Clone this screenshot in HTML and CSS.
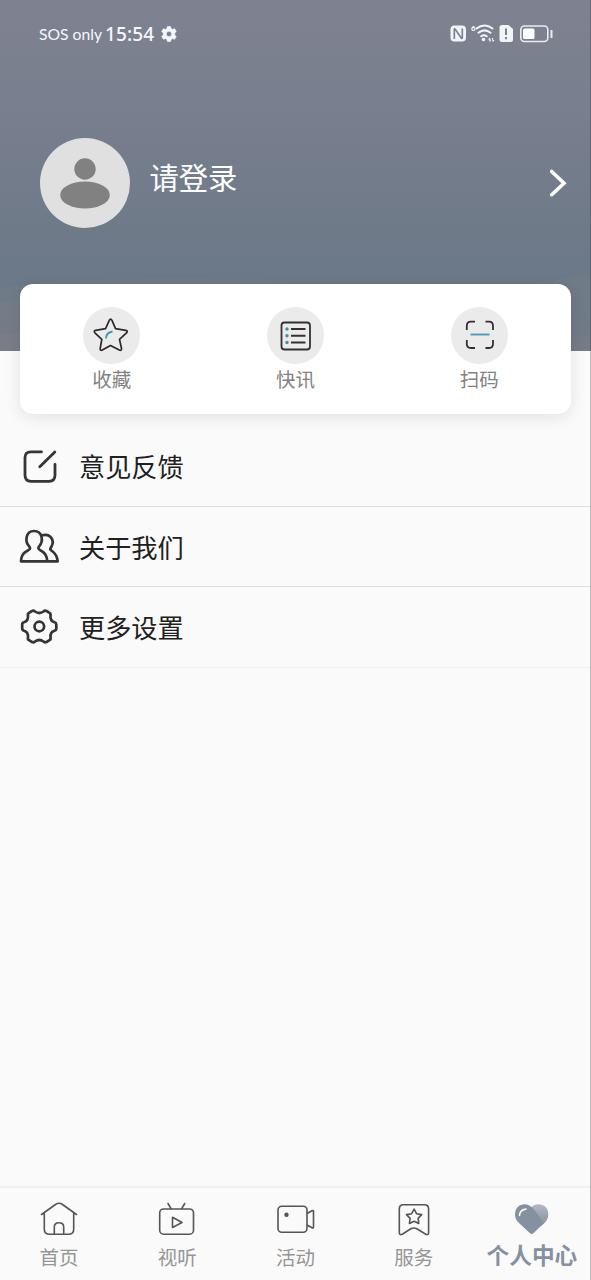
FILE: index.html
```html
<!DOCTYPE html>
<html lang="zh-CN">
<head>
<meta charset="utf-8">
<title>个人中心</title>
<link rel="stylesheet" href="styles.css">
</head>
<body>
<div class="screen">
  <header class="hero">
    <svg class="waves" viewBox="0 0 591 86" preserveAspectRatio="none">
      <path d="M0 23C80 12 170 12 260 14C390 34 480 30 591 9V86H0Z" fill="#83868b" fill-opacity=".2"/>
      <path d="M0 38C60 26 120 23 180 23V86H0Z" fill="#8a828b" fill-opacity=".2"/>
      <path d="M0 70C250 58 400 80 591 71V86H0Z" fill="#8d858b" fill-opacity=".24"/>
    </svg>
    <div class="status">
      <span class="carrier">SOS only</span>
      <span class="time">15:54</span>
      <svg class="cog" viewBox="0 0 16 16" width="16" height="16"><path fill="#f5f8fb" stroke="#f5f8fb" stroke-width=".6" stroke-linejoin="round" fill-rule="evenodd" d="M6.400.5h3.200l.5 2.100 1.300.8 2.200-.7 1.700 2.800L13.700 7v2l1.600 1.500-1.700 2.800-2.200-.7-1.300.8-.5 2.100H6.400l-.5-2.100-1.300-.8-2.200.7L.7 10.500 2.300 9V7L.7 5.500 2.400 2.700l2.200.7 1.300-.8ZM8 5.300a2.700 2.700 0 1 0 0 5.400 2.700 2.700 0 0 0 0-5.400Z"/></svg>
      <svg class="indicators" viewBox="450 22 104 24" width="104" height="24">
        <rect x="450.500" y="25.500" width="15.500" height="16" rx="4" fill="#f2f5f8"/>
        <path d="M454.300 39V29.500Q454.300 28.500 455.300 29.300L461.200 38Q462.300 39 462.300 37.500V28.500" fill="none" stroke="#7c8290" stroke-width="1.700"/>
        <text x="471" y="31" class="wifi-gen">6</text>
        <g fill="none" stroke="#f2f5f8" stroke-width="2" stroke-linecap="round"><path d="M476.500 28.500Q484.500 22.500 492.500 28.500M478.500 32.700Q484.500 28 490.500 32.700M481.300 36.300Q484 34.300 486.700 36.300"/></g>
        <circle cx="483.500" cy="39.500" r="1.800" fill="#f2f5f8"/>
        <path d="M488 39.500l1.500-2 1.300 2v2h-1.500v-2ZM491.800 38h1.300v2h1.500l-1.800 2.200Z" fill="#f2f5f8"/>
        <path d="M502 25h6.500l4.500 4v10.500a2.500 2.500 0 0 1-2.500 2.500h-8.500a2.500 2.500 0 0 1-2.500-2.500v-12a2.500 2.500 0 0 1 2.500-2.500Z" fill="#f2f5f8"/>
        <path d="M506 28.500v6.500M506 37v2.200" stroke="#7c8290" stroke-width="2"/>
        <rect x="520.800" y="26" width="27" height="15.500" rx="3.500" fill="none" stroke="#e9ecf0" stroke-width="1.600"/>
        <rect x="523" y="28.500" width="11.500" height="10.500" rx="1.500" fill="#fff"/>
        <path d="M551.500 30v8" stroke="#e9ecf0" stroke-width="2"/>
      </svg>
    </div>
    <div class="profile">
      <svg class="avatar" viewBox="0 0 90 90" width="90" height="90"><circle cx="45" cy="45" r="45" fill="#e0e0e0"/><circle cx="45" cy="31" r="10.700" fill="#818181"/><ellipse cx="45" cy="57" rx="24.800" ry="13.500" fill="#818181"/></svg>
      <span class="login">请登录</span>
      <svg class="arrow" viewBox="548 168 20 30" width="20" height="30"><path d="M551.700 171.500L564 183.300L551.700 194.700" fill="none" stroke="#fff" stroke-width="3.600" stroke-linecap="round"/></svg>
    </div>
  </header>

  <section class="card">
    <div class="shortcut">
      <div class="disc"><svg viewBox="83 307 57 57" width="57" height="57">
        <path d="M109.300 320.300Q110.700 318 112 320.300L115.500 328.700L125.800 330.300Q128.300 330.900 126.500 332.800L119.500 339.300L121.500 348.500Q121.700 351 119.300 350L110.500 345.500L102.300 350Q100 351 100.200 348.500L101.800 339.300L94.900 332.800Q93.300 330.900 95.600 330.300L105.600 328.700Z" fill="none" stroke="#2e292b" stroke-width="1.700" stroke-linejoin="round"/>
        <path d="M106 338.500Q106 332.500 112.500 331.500" fill="none" stroke="#359bb8" stroke-width="1.900"/>
      </svg></div>
      <span>收藏</span>
    </div>
    <div class="shortcut">
      <div class="disc"><svg viewBox="267 307 57 57" width="57" height="57">
        <rect x="281.500" y="322.500" width="28.500" height="27" rx="3" fill="none" stroke="#343032" stroke-width="1.800"/>
        <path d="M291 329h14.500M291 335.700h14.500M291 342.500h14.500" stroke="#343032" stroke-width="1.900"/>
        <g fill="#3f8fb0"><circle cx="287" cy="329" r="1.700"/><circle cx="287" cy="335.700" r="1.700"/><circle cx="287" cy="342.500" r="1.700"/></g>
      </svg></div>
      <span>快讯</span>
    </div>
    <div class="shortcut">
      <div class="disc"><svg viewBox="451 307 57 57" width="57" height="57">
        <path d="M466.800 330V326Q466.800 321.700 471 321.700H475M485.500 321.700H489Q493 321.700 493 326V330M493 340V344Q493 348 489 348H485.500M475 348H471Q466.800 348 466.800 344V340" fill="none" stroke="#343032" stroke-width="1.800"/>
        <path d="M470.500 334.500H489.500" stroke="#459dbd" stroke-width="1.900"/>
      </svg></div>
      <span>扫码</span>
    </div>
  </section>

  <nav class="menu">
    <div class="row">
      <svg viewBox="19 445 41 41" width="41" height="41"><path d="M41.500 451.800H31Q25 451.800 25 457.500V475Q25 481.300 31 481.300H49Q55 481.300 55 475V464.500M39.800 466.700L54.800 452" fill="none" stroke="#353537" stroke-width="2.800" stroke-linecap="round"/></svg>
      <span>意见反馈</span>
    </div>
    <div class="row">
      <svg viewBox="19 526 41 41" width="41" height="41"><g fill="none" stroke="#353537" stroke-width="2.700" stroke-linecap="round" stroke-linejoin="round"><path d="M29.500 546.800C24.500 542 25.500 531 34 531C42.500 531 44 541 38.800 546.800C37.500 548.500 39 549.500 41.500 551Q47 554 47.300 561.300H21Q21 554 27 551C29.500 549.500 31 548.500 29.500 546.800ZM42.500 535.300C50 533 55 540 51.500 546.500C50 549 49.500 549.300 52 551Q57 554.500 57.700 561.300H47.300"/></g></svg>
      <span>关于我们</span>
    </div>
    <div class="row">
      <svg viewBox="19 606 41 41" width="41" height="41"><g fill="none" stroke="#353537" stroke-width="2.700" stroke-linejoin="round"><path d="M32 611Q33.500 610 35 611.500Q39.200 614.500 43.500 611.500Q45 610 46.500 611L49.500 612.800Q51 613.700 50.500 615.500Q50 621 54.500 622.300Q56.300 622.800 56.300 624.500V628.500Q56.300 630.200 54.500 630.700Q50 632 50.500 637.500Q51 639.300 49.500 640.200L46.500 642Q45 643 43.500 641.500Q39.200 638.500 35 641.500Q33.500 643 32 642L29 640.200Q27.500 639.300 28 637.500Q28.500 632 24 630.700Q22.200 630.200 22.200 628.500V624.500Q22.200 622.800 24 622.300Q28.500 621 28 615.500Q27.500 613.700 29 612.800Z"/><circle cx="39.300" cy="626.500" r="4.800"/></g></svg>
      <span>更多设置</span>
    </div>
  </nav>

  <footer class="tabs">
    <div class="tab">
      <svg viewBox="39 1198 40 40" width="40" height="40"><path d="M41.500 1214.500L55.500 1204.500Q59 1202 62.500 1204.500L76.500 1214.500M44.300 1213V1229Q44.300 1234.300 49.500 1234.300H68.500Q73.700 1234.300 73.700 1229V1213M54.300 1234V1227Q54.300 1222.700 59 1222.700Q63.700 1222.700 63.700 1227V1234" fill="none" stroke="#555" stroke-width="1.600" stroke-linecap="round"/></svg>
      <span>首页</span>
    </div>
    <div class="tab">
      <svg viewBox="157 1198 40 40" width="40" height="40"><g fill="none" stroke="#555" stroke-width="1.600" stroke-linejoin="round" stroke-linecap="round"><rect x="159.700" y="1209" width="33.800" height="25.200" rx="4"/><path d="M168 1203.500L171 1208.700M184.700 1203.500L181.700 1208.700M172.500 1217.300V1227.500L182 1222.500Z"/></g></svg>
      <span>视听</span>
    </div>
    <div class="tab">
      <svg viewBox="275.500 1198 40 40" width="40" height="40"><g fill="none" stroke="#555" stroke-width="1.600" stroke-linejoin="round"><rect x="277.500" y="1206.300" width="29" height="25.900" rx="3.800"/><path d="M306.500 1213.500L312 1210.500Q313 1210.300 313 1211.500V1227Q313 1228.300 312 1228L306.500 1225"/></g><circle cx="286" cy="1214.800" r="2.200" fill="#555"/></svg>
      <span>活动</span>
    </div>
    <div class="tab">
      <svg viewBox="393.700 1198 40 40" width="40" height="40"><g fill="none" stroke="#555" stroke-width="1.600" stroke-linejoin="round"><path d="M403 1204.700H424Q428.300 1204.700 428.300 1209V1232.500Q428.300 1235.500 425.500 1234.200L416.500 1228.800Q413.500 1227.200 410.500 1228.800L402 1234.200Q399 1235.500 399 1232.500V1209Q399 1204.700 403 1204.700Z"/><path d="M413.800 1209L416.200 1213.700L421.400 1214.600L417.800 1218.400L418.500 1223.500L413.800 1221.300L409.100 1223.500L409.800 1218.400L406.200 1214.600L411.400 1213.700Z"/></g></svg>
      <span>服务</span>
    </div>
    <div class="tab active">
      <svg viewBox="512 1198 40 40" width="40" height="40">
        <defs><linearGradient id="lobe" x1="0" y1="0" x2="0" y2="1"><stop offset="0" stop-color="#b3b7c2"/><stop offset="1" stop-color="#8791a0"/></linearGradient></defs>
        <path d="M531 1207.500C537 1201.500 548.300 1204 548.300 1214.500C548.300 1218.500 546.500 1221 544 1223.500L541 1226Z" fill="url(#lobe)"/>
        <path d="M533 1208.500C526 1200.500 515 1204.500 515 1214.500Q515 1219.300 519 1223L530 1233.200Q531.700 1234.800 533.400 1233.200L543.500 1223.500Q542.500 1220 533 1208.500Z" fill="#8590a0"/>
        <path d="M519.500 1215.500Q519.800 1210 526 1209" fill="none" stroke="#fff" stroke-width="1.500" stroke-linecap="round"/>
      </svg>
      <span>个人中心</span>
    </div>
  </footer>
  <div class="edge"></div>
</div>
</body>
</html>
```
FILE: styles.css
```css
* { box-sizing: border-box; }
body {
  margin: 0;
  font-family: "Noto Sans CJK SC", sans-serif;
  background: #fafafa;
}
svg { display: block; flex: none; }
.screen {
  position: relative;
  width: 591px;
  height: 1280px;
  display: flex;
  flex-direction: column;
  overflow: hidden;
}
.hero {
  position: relative;
  height: 351px;
  flex: none;
  background: linear-gradient(#7e8190 0, #7b808f 70px, #6c7988 270px, #6b7785 351px);
}
.waves {
  position: absolute;
  left: 0;
  bottom: 0;
  width: 100%;
  height: 86px;
}
.status {
  display: flex;
  align-items: center;
  height: 46px;
  padding: 22px 37px 0 39px;
  color: #f5f8fb;
  line-height: 24px;
  white-space: nowrap;
}
.carrier { width: 66px; font: 15.700px/24px Lato, sans-serif; }
.time { width: 56px; font: 500 19px/24px "Noto Sans", sans-serif; letter-spacing: .1px; }
.indicators { margin-left: auto; }
.wifi-gen { font: bold 8px Roboto, sans-serif; fill: #f2f5f8; }
.profile {
  display: flex;
  align-items: center;
  padding: 92px 23px 0 39.500px;
}
.login {
  margin: -15px 0 0 20px;
  font-size: 29.300px;
  line-height: 40px;
  color: #fff;
}
.arrow { margin-left: auto; }
.card {
  position: relative;
  display: flex;
  flex: none;
  height: 130px;
  margin: -67px 20px 0;
  padding-top: 23px;
  border-radius: 13px;
  background: #fff;
  box-shadow: 0 3px 16px rgba(0, 0, 0, .1);
}
.shortcut {
  flex: 1;
  display: flex;
  flex-direction: column;
  align-items: center;
  font-size: 19.500px;
  line-height: 29px;
  color: #828282;
}
.disc { border-radius: 50%; background: #ebebeb; }
.menu { padding-top: 12px; }
.row {
  display: flex;
  align-items: center;
  gap: 19px;
  height: 80.500px;
  padding-left: 19px;
  border-bottom: 1px solid #dedede;
  font-size: 26.200px;
  line-height: 40px;
  color: #202020;
}
.row span { padding-top: 1px; }
.row:last-child { border-color: #efefef; }
.tabs {
  display: flex;
  height: 94px;
  margin-top: auto;
  padding-top: 10px;
  border-top: 2px solid #f0f0f0;
}
.tab {
  flex: 1;
  display: flex;
  flex-direction: column;
  align-items: center;
  font-size: 19.500px;
  line-height: 37px;
  color: #959595;
  white-space: nowrap;
}
.active {
  color: #8590a0;
  font-size: 22.700px;
  font-weight: 700;
  line-height: 33px;
}
.edge {
  position: absolute;
  right: 0;
  top: 0;
  width: 1px;
  height: 100%;
  background: rgba(70, 75, 80, .35);
}
```
